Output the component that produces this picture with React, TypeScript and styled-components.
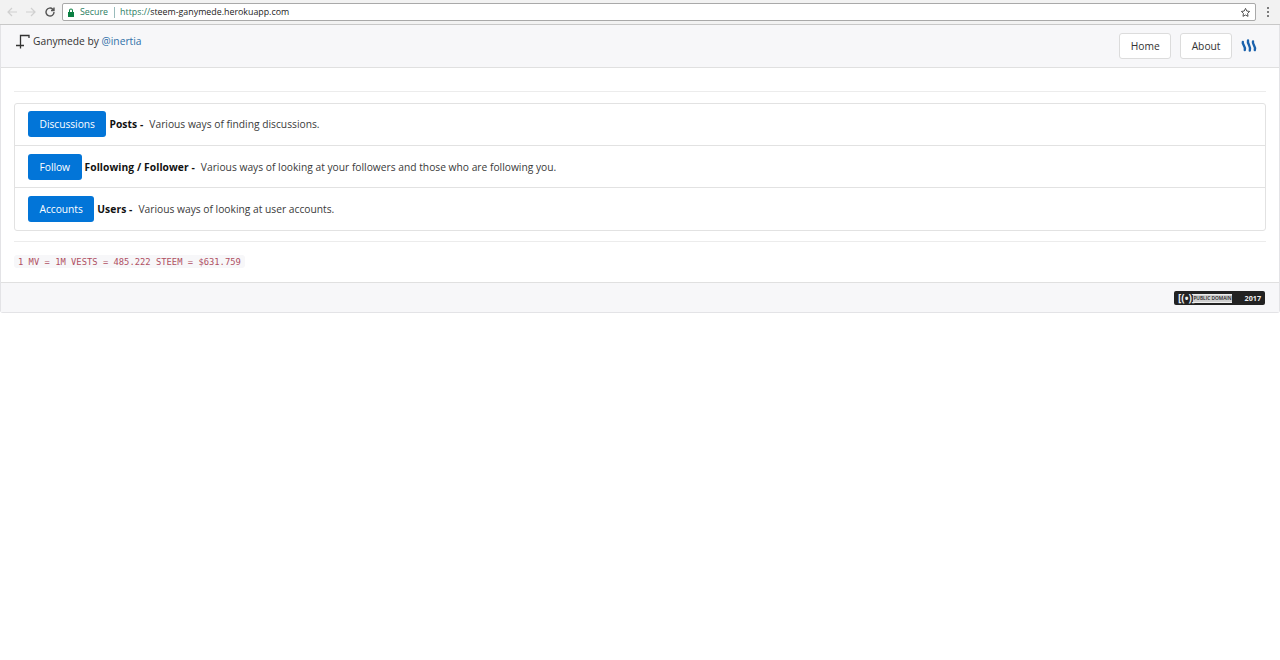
import React from "react";
import styled, { createGlobalStyle } from "styled-components";

const Global = createGlobalStyle`
  html, body { margin: 0; padding: 0; background: #fff; }
  body { font-family: "Open Sans", "Noto Sans", sans-serif; font-size: 10.25px; color: #292b2c; }
`;

const Chrome = styled.div`
  height: 24px;
  background: #f2f2f2;
  border-bottom: 1px solid #c8c8c8;
  display: flex;
  align-items: center;
  padding: 0 0 0 6px;
`;
const NavIcons = styled.div`
  display: flex;
  align-items: center;
  gap: 7px;
  width: 56px;
  flex: none;
`;
const Omnibox = styled.div`
  width: 1194px;
  height: 18px;
  flex: none;
  box-sizing: border-box;
  background: #fff;
  border: 1px solid #a9a9a9;
  border-radius: 2px;
  display: flex;
  align-items: center;
  padding: 0 4px 0 4px;
  font-size: 8.85px;
`;
const Secure = styled.span`
  color: #2a7d5f;
  margin-left: 5px;
  padding-right: 6px;
  border-right: 1px solid #9bb;
  line-height: 11px;
`;
const Url = styled.span`
  color: #222;
  margin-left: 5px;
  flex: 1;
`;
const Scheme = styled.span`
  color: #2a7d5f;
`;
const Menu = styled.div`
  margin-left: 10px;
  display: flex;
  align-items: center;
`;

const Card = styled.div`
  border: 1px solid #e3e3e6;
  border-top: 0;
  border-radius: 0 0 3px 3px;
  margin: 0;
`;
const Header = styled.div`
  height: 43px;
  box-sizing: border-box;
  background: #f7f7f9;
  border-bottom: 1px solid #e0e0e0;
  display: flex;
  align-items: flex-start;
  justify-content: space-between;
  padding: 8px 22px 0 14px;
`;
const Brand = styled.div`
  display: flex;
  align-items: flex-start;
  color: #333;
  line-height: 16px;
  gap: 2px;
`;
const Link = styled.a`
  color: #2f6fa8;
  text-decoration: none;
`;
const Nav = styled.div`
  display: flex;
  align-items: flex-start;
  gap: 9px;
`;
const NavButton = styled.div`
  box-sizing: border-box;
  height: 26px;
  padding: 0 10.5px;
  border: 1px solid #dcdcdc;
  border-radius: 3px;
  background: #fff;
  color: #333;
  display: flex;
  align-items: center;
`;
const Body = styled.div`
  padding: 23px 13px 14px 13px;
`;
const Rule = styled.div`
  height: 1px;
  background: #ececec;
`;
const List = styled.div`
  margin: 11px 0 10px;
  border: 1px solid #e2e2e2;
  border-radius: 3px;
`;
const Item = styled.div`
  height: 42px;
  box-sizing: border-box;
  display: flex;
  align-items: center;
  padding: 0 13px;
  color: #3a3a3a;
  &:first-child {
    height: 41px;
    padding-bottom: 1px;
  }
  &:last-child {
    height: 43px;
    padding-bottom: 1px;
  }
  & + & {
    border-top: 1px solid #e2e2e2;
  }
`;
const Action = styled.div`
  background: #0275d8;
  color: #fff;
  border-radius: 3px;
  height: 26px;
  padding: 0 11.5px;
  display: flex;
  align-items: center;
  margin-right: 3px;
  letter-spacing: -0.04px;
`;
const Title = styled.b`
  color: #111;
  font-weight: 700;
  margin-right: 6px;
  white-space: pre;
  letter-spacing: 0.08px;
`;
const Code = styled.code`
  display: inline-block;
  vertical-align: top;
  margin-top: 13px;
  font-family: "DejaVu Sans Mono", monospace;
  font-size: 8.82px;
  line-height: 12px;
  color: #b04f62;
  background: #f7f7f9;
  border-radius: 3px;
  padding: 1px 4px 0;
`;
const Footer = styled.div`
  height: 30px;
  box-sizing: border-box;
  background: #f7f7f9;
  border-top: 1px solid #e0e0e0;
  display: flex;
  justify-content: flex-end;
  align-items: flex-start;
  padding: 8px 14px 0 0;
`;
const Badge = styled.div`
  width: 91px;
  height: 14px;
  box-sizing: border-box;
  background: #222;
  border-radius: 2px;
  color: #eee;
  display: flex;
  align-items: center;
  padding: 0 3px 0 4px;
  font-size: 7.2px;
  font-weight: 700;
`;
const Cc = styled.span`
  font-size: 10px;
  line-height: 12px;
  width: 15px;
  flex: none;
  white-space: nowrap;
`;
const Pd = styled.span`
  font-size: 4.8px;
  font-weight: 600;
  background: #cfcfcf;
  color: #222;
  border-top: 1px solid #eee;
  border-bottom: 1px solid #eee;
  line-height: 7px;
  width: 39px;
  text-align: center;
  white-space: nowrap;
`;
const Year = styled.span`
  margin-left: auto;
  margin-right: 1px;
`;

const rows = [
  ["Discussions", "Posts -", "Various ways of finding discussions."],
  ["Follow", "Following / Follower -", "Various ways of looking at your followers and those who are following you."],
  ["Accounts", "Users -", "Various ways of looking at user accounts."],
];

export default function App() {
  return (
    <>
      <Global />
      <Chrome>
        <NavIcons>
          <svg width="12" height="12" viewBox="0 0 12 12" fill="none" stroke="#d0d0d0" strokeWidth="1.2"><path d="M11 6H2M6 2 2 6l4 4" /></svg>
          <svg width="12" height="12" viewBox="0 0 12 12" fill="none" stroke="#d0d0d0" strokeWidth="1.2"><path d="M1 6h9M6 2l4 4-4 4" /></svg>
          <svg width="12" height="12" viewBox="0 0 12 12" fill="none" stroke="#555" strokeWidth="1.4"><path d="M10 6a4 4 0 1 1-1.2-2.8L10 4.400M10 1.500v3H7" /></svg>
        </NavIcons>
        <Omnibox>
          <svg width="8" height="9" viewBox="0 0 8 9"><path fill="#0b8043" d="M1 4h6v5H1zM2 4V2.500a2 2 0 0 1 4 0V4H5V2.500a1 1 0 0 0-2 0V4z" /></svg>
          <Secure>Secure</Secure>
          <Url><Scheme>https://</Scheme>steem-ganymede.herokuapp.com</Url>
          <svg width="11" height="11" viewBox="0 0 24 24" fill="none" stroke="#444" strokeWidth="2"><path d="m12 3 2.800 5.800 6.200.9-4.500 4.400 1 6.300L12 17.500 6.500 20.400l1-6.300L3 9.700l6.200-.9z" /></svg>
        </Omnibox>
        <Menu>
          <svg width="4" height="12" viewBox="0 0 4 12" fill="#555"><circle cx="2" cy="2" r="1" /><circle cx="2" cy="6" r="1" /><circle cx="2" cy="10" r="1" /></svg>
        </Menu>
      </Chrome>
      <Card>
        <Header>
          <Brand>
            <svg width="16" height="17" viewBox="0 0 16 17" fill="none" stroke="#333" strokeWidth="1.300"><path d="M14 5V2.500H5.500V15.500M1 12.500h8" /></svg>
            <span>Ganymede by <Link>@inertia</Link></span>
          </Brand>
          <Nav>
            <NavButton>Home</NavButton>
            <NavButton>About</NavButton>
            <svg width="16" height="14" viewBox="0 0 16 14" fill="none" stroke="#1a62ad" strokeWidth="2.400" strokeLinecap="round" style={{ marginTop: 6 }}><path d="M1.800 3c-.8 2.500 3 4 2 8" /><path d="M7 1.500c-1 3.500 3.200 5.500 1.800 10" /><path d="M12 2.500c-1 3 3.200 4.500 1.800 8.500" /></svg>
          </Nav>
        </Header>
        <Body>
          <Rule />
          <List>
            {rows.map(([a, t, d]) => (
              <Item key={a}>
                <Action>{a}</Action>
                <Title>{t}</Title>
                <span>{d}</span>
              </Item>
            ))}
          </List>
          <Rule />
          <Code>1 MV = 1M VESTS = 485.222 STEEM = $631.759</Code>
        </Body>
        <Footer>
          <Badge>
            <Cc>[(•)]</Cc>
            <Pd>PUBLIC DOMAIN</Pd>
            <Year>2017</Year>
          </Badge>
        </Footer>
      </Card>
    </>
  );
}
